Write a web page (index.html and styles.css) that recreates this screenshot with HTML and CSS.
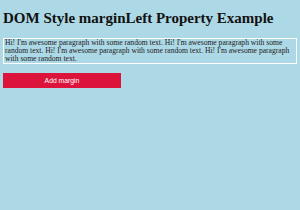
FILE: index.html
```html
<!DOCTYPE html>
<html>
  <head>
    <meta charset="UTF-8" />
    <title>DOM Style marginLeft Property Example</title>
    <link rel="stylesheet" href="styles.css">
  </head>
  <body>
    <h1>DOM Style marginLeft Property Example</h1>

    <p id="para" class="para">
      Hi! I'm awesome paragraph with some random text. Hi! I'm awesome
      paragraph with some random text. Hi! I'm awesome paragraph with some
      random text. Hi! I'm awesome paragraph with some random text.
    </p>

    <button class="btn" onclick="addMargin()">Add margin</button>

    <script>
      function addMargin() {
        document.getElementById("para").style.marginLeft = "20px";
      }
    </script>
  </body>
</html>
```

FILE: styles.css
```css
body {
  margin: 0;
  padding: 10px 3px;
  background-color: lightblue;
  font-family: "Liberation Serif", "Times New Roman", serif;
}

h1 {
  font-size: 15px;
  line-height: 17px;
  color: #111;
  margin: 0 0 11px;
}

.para {
  font-size: 7.6px;
  line-height: 8px;
  color: #222;
  border: 1px solid white;
  padding: 0 1px;
  margin: 0 0 9px;
}

.btn {
  display: block;
  width: 118px;
  height: 15px;
  padding: 0;
  font-family: "Liberation Sans", Arial, sans-serif;
  font-size: 6.8px;
  color: white;
  background-color: crimson;
  border: none;
  cursor: pointer;
}
```
